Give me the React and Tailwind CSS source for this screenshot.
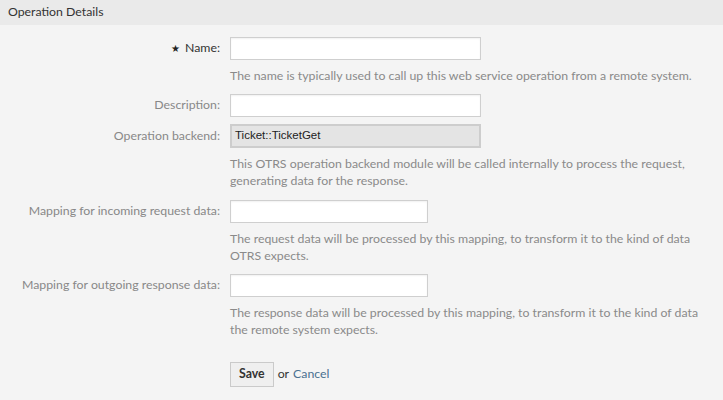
import React from "react";

const font = { fontFamily: "Lato, 'Open Sans', sans-serif" };

function Label({ children, required, h = "h-[23px]" }) {
  return (
    <div className={`w-[230px] shrink-0 pr-[10px] ${h} flex items-center justify-end text-[12.3px] ${required ? "text-[#333]" : "text-[#888]"}`}>
      {required && <span className="mr-[5px] text-[10px] text-[#222]">★</span>}
      {children}
    </div>
  );
}

function Input({ w = "w-[251px]" }) {
  return (
    <div className={`${w} h-[23px] bg-white border border-[#cfcfcf] shadow-[inset_0_1px_2px_rgba(0,0,0,0.06)]`} />
  );
}

function Help({ children }) {
  return <div className="mt-[7px] text-[12.3px] leading-[17px] text-[#8a8a8a] w-[472px]">{children}</div>;
}

export default function App() {
  return (
    <div className="w-[723px] h-[400px] bg-[#f4f4f4] overflow-hidden" style={font}>
      <div className="h-[25px] bg-[#eaeaea] flex items-center px-[8px] text-[12.3px] text-[#333]">Operation Details</div>
      <div className="pt-[12px]">
        <div className="flex">
          <Label required>Name:</Label>
          <div>
            <Input />
            <Help>The name is typically used to call up this web service operation from a remote system.</Help>
          </div>
        </div>
        <div className="flex mt-[10px]">
          <Label>Description:</Label>
          <Input />
        </div>
        <div className="flex mt-[7px]">
          <Label h="h-[24px]">Operation backend:</Label>
          <div>
            <div
              className="w-[251px] h-[24px] bg-[#e4e4e4] border-2 border-[#cdcdcd] flex items-center pl-[3px] text-[11.5px] text-[#222]"
              style={{ fontFamily: "'Liberation Sans', Arial, sans-serif" }}
            >
              Ticket::TicketGet
            </div>
            <Help>
              This OTRS operation backend module will be called internally to process the request, generating data for the response.
            </Help>
          </div>
        </div>
        <div className="flex mt-[11px]">
          <Label>Mapping for incoming request data:</Label>
          <div>
            <Input w="w-[198px]" />
            <Help>
              The request data will be processed by this mapping, to transform it to the kind of data OTRS expects.
            </Help>
          </div>
        </div>
        <div className="flex mt-[10px]">
          <Label>Mapping for outgoing response data:</Label>
          <div>
            <Input w="w-[198px]" />
            <Help>
              The response data will be processed by this mapping, to transform it to the kind of data the remote system expects.
            </Help>
          </div>
        </div>
        <div className="flex mt-[24px]">
          <div className="w-[230px] shrink-0" />
          <div className="flex items-center gap-[4px] text-[12.3px]">
            <button className="h-[25px] px-[8px] bg-[#efefef] border border-[#cacaca] font-bold text-[#333] text-[12.3px]" style={font}>
              Save
            </button>
            <span className="text-[#333]">or</span>
            <a className="text-[#4a7090]">Cancel</a>
          </div>
        </div>
      </div>
    </div>
  );
}
